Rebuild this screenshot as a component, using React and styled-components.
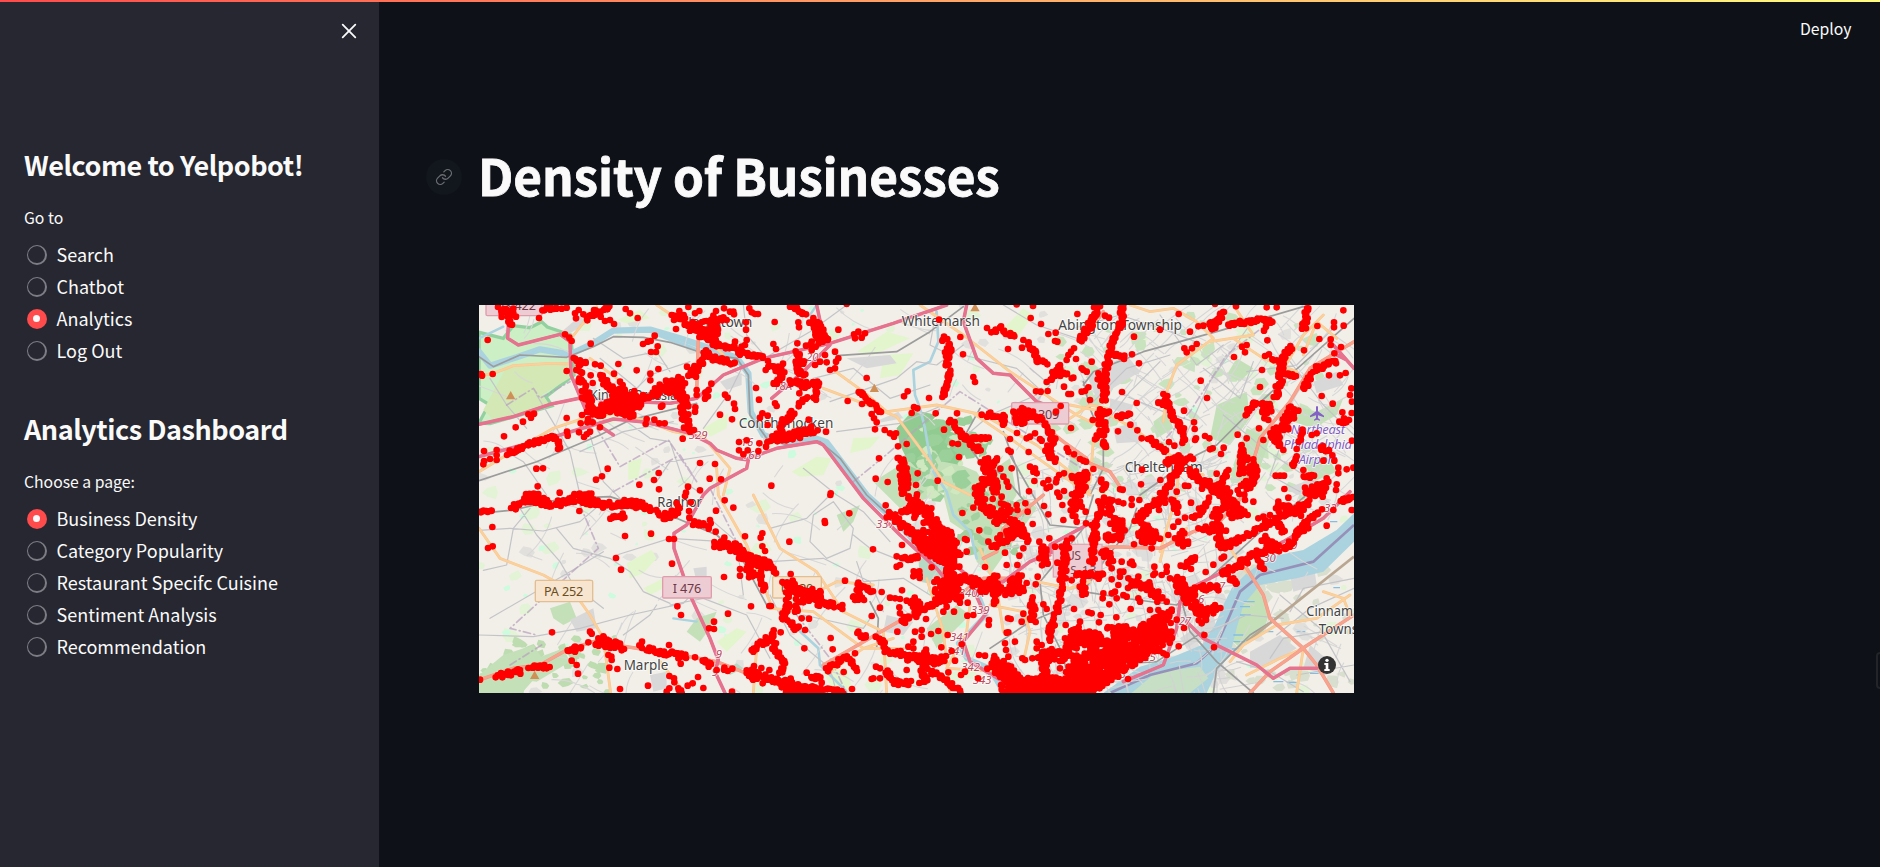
import React from "react";
import styled, { createGlobalStyle } from "styled-components";

const GlobalStyle = createGlobalStyle`
  * { box-sizing: border-box; }
  body {
    margin: 0;
    background: #0e1117;
    color: #fafafa;
    font-family: "Noto Sans CJK SC", "Noto Sans", sans-serif;
  }
`;

const Shell = styled.div`
  position: relative;
  display: flex;
  width: 100%;
  height: 867px;
  overflow: hidden;
`;

const Decoration = styled.div`
  position: absolute;
  inset: 0 0 auto 0;
  height: 2px;
  background: linear-gradient(90deg, #ff4b4b, #fffd80);
`;

const Sidebar = styled.aside`
  flex: 0 0 379px;
  background: #262730;
  padding: 19px 24px;
`;

const SidebarHeader = styled.div`
  display: flex;
  justify-content: flex-end;
  height: 124px;
`;

const CloseButton = styled.button`
  width: 24px;
  height: 24px;
  margin-right: -6px;
  padding: 0;
  border: 0;
  background: none;
  color: #fafafa;
  display: grid;
  place-items: center;
`;

const SidebarTitle = styled.h2`
  margin: 0;
  height: 62px;
  font-size: 27px;
  line-height: 44px;
  font-weight: 600;
  letter-spacing: -0.46px;
  white-space: nowrap;
`;

const RadioLabel = styled.p`
  margin: 0;
  height: 34px;
  padding-top: 1px;
  font-size: 15.75px;
  line-height: 24px;
`;

const RadioGroup = styled.div`
  display: flex;
  flex-direction: column;
  padding-left: 3px;
  margin-bottom: 40px;
`;

const Option = styled.label`
  display: flex;
  align-items: center;
  gap: 9.5px;
  height: 32px;
  font-size: 18px;
  line-height: 32px;
  white-space: nowrap;
`;

const OptionName = styled.span`
  margin-top: -1.5px;
`;

const Ring = styled.span`
  flex: none;
  width: 20px;
  height: 20px;
  border-radius: 50%;
  display: grid;
  place-items: center;
  padding: 0 1px 1px 0;
  background: ${(p) => (p.$on ? "#ff4b4b" : "#262730")};
  border: solid ${(p) => (p.$on ? "#ff4b4b" : "#7d7d85")};
  border-width: ${(p) => (p.$on ? "0" : "1px 2px 2px 1px")};
`;

const Knob = styled.span`
  width: 7px;
  height: 7px;
  border-radius: 50%;
  background: #fafafa;
`;

const Main = styled.main`
  flex: 1;
  min-width: 0;
  display: flex;
  flex-direction: column;
`;

const Toolbar = styled.header`
  display: flex;
  justify-content: flex-end;
  height: 138px;
  padding: 17px 28.5px 0 0;
  font-size: 15.75px;
  line-height: 24px;
`;

const TitleRow = styled.div`
  display: flex;
  align-items: center;
  gap: 16px;
  height: 78px;
  padding-left: 47px;
`;

const Anchor = styled.span`
  width: 36px;
  height: 36px;
  border-radius: 50%;
  background: #12161d;
  color: #6b6d71;
  display: grid;
  place-items: center;
`;

const Title = styled.h1`
  margin: -4px 0 0;
  font-size: 49.5px;
  line-height: 74px;
  font-weight: 700;
  letter-spacing: -0.1px;
  -webkit-text-stroke: 0.8px currentColor;
  white-space: nowrap;
`;

const MapFrame = styled.div`
  width: 875px;
  height: 388px;
  margin: 89px 0 0 100px;
  overflow: hidden;
  background: #f2efe9;
  svg { display: block; }
`;

const EdgeHandle = styled.div`
  position: absolute;
  right: -6px;
  top: 652px;
  width: 10px;
  height: 37px;
  border: 2px solid #222428;
  border-radius: 4px;
`;

/* ---------- map data: drawing units are a third of a pixel ---------- */

const tiles = [
  { x: 0, y: 0,
    dots: "53,135 33,237 36,242 68,237 84,36 95,66 120,88 207,69 42,468 42,498 40,508 60,492 80,465 80,480 80,495 102,424 137,397 159,380 175,358 192,356 183,368 111,480 290,228 290,369 362,146 275,41 290,38 326,45 340,58 318,70 315,55 352,76 392,65 405,78 420,75 432,87 362,60 372,45 467,42 480,55 503,69 285,118 298,128 305,138 519,147 533,140 542,138 554,122 563,154 543,171 558,171 445,207 500,226 565,222 541,236 541,256 392,212 375,208 362,241 368,264 432,236 450,260 458,270 345,288 365,315 336,308 391,240 395,252 400,268 410,275 428,275 530,372 527,387 553,374 568,385 584,385 573,335 577,332 638,431 660,410 672,405 655,392 291,410 293,422 267,440 270,458 264,462 336,360 332,385 352,382 354,372 327,412 342,426 350,418 360,410 368,382 390,397 199,521 219,520 378,554 396,544 413,521 203,574 269,593 566,534 552,555 567,583 508,569 654,575 690,504 735,507 719,551 753,553 690,586 648,593 612,75 605,60 628,48 641,60 618,102 655,36 688,48 675,55 738,48 730,62 737,80 780,50 790,50 762,40 792,58 770,75 750,75 828,82 828,104 838,40 845,52 855,57 864,57 795,140 793,152 778,160 830,135 825,150 815,155 660,107 651,215 663,225 672,235 655,242 684,228 678,245 625,246 680,285 680,300 724,266 716,285 765,299 773,308 792,326 795,342 786,373 750,359 675,350 676,337 858,279 867,314 877,355 870,368 893,362 893,390 807,441 807,466 830,436 833,466 820,478 868,445 888,455 865,468 887,225 895,215",
    trails: "8:95,48 125,45 130,65|5:215,42 240,42 262,38|5:355,70 380,50 420,38|8:610,60 640,75|12:655,90 690,105 715,130 745,145|12:700,120 740,110 720,90|4:740,150 785,160|9:700,85 760,70|7:800,170 850,180 880,190|7:700,170 730,190 790,205|8:660,240 690,205 715,175|13:560,290 600,265 640,262|10:560,290 620,280|14:630,290 640,330 650,390|8:390,245 430,290 440,310|28:430,310 500,315|30:440,320 490,318|14:450,340 490,355|5:500,320 560,300|14:370,355 430,330|14:365,350 430,345|4:315,190 350,205|10:320,200 330,250 345,290 365,330|6:115,475 180,445 250,425|5:250,425 268,455|3:170,600 205,598|3:315,600 365,598|10:700,310 715,290|7:110,45 120,85" },
  { x: 900, y: 0,
    dots: "14,81 10,147 18,162 39,206 88,295 15,325 20,333 116,374 168,410 120,400 205,104 252,118 255,130 265,110 285,115 275,128 130,69 85,82 87,97 82,145 75,42 95,55 108,58 108,152 120,150 165,180 195,170 205,190 198,200 135,210 150,200 170,202 180,225 195,220 290,249 233,318 276,327 315,403 344,405 305,357 312,370 320,382 360,415 372,425 378,415 384,454 410,447 327,490 317,551 353,561 413,289 402,304 425,354 432,336 442,340 477,309 497,355 507,74 571,126 579,178 610,246 615,261 714,162 756,158 733,124 782,69 813,87 789,33 740,28 835,117 855,138 862,140 857,113 870,210 882,275 895,297 895,180 890,195 798,289 812,290 833,288 872,333 858,350 635,359 661,361 680,365 700,360 702,385 730,350 741,414 720,432 780,425 795,415 770,430 776,471 715,466 722,470 691,521 725,520 777,589 793,558 862,593 882,588 882,535 867,540 860,552 858,562 835,555 820,565 840,575 830,580 443,535 438,570 503,557 441,598 522,404 537,382 561,355 547,445 564,447 567,486 815,437 810,432 890,460 895,470 780,515 795,520 800,535 790,530 710,560 715,575 700,545 4,572 182,595 60,35 70,35 230,27",
    trails: "4:80,40 100,58|15:125,85 160,110 130,155|12:140,100 165,130|13:85,180 95,240|9:0,205 25,225 45,245|5:10,270 35,245|8:60,260 100,270 145,265|5:85,330 110,310|5:135,310 145,260|10:70,355 40,385 20,430|12:0,430 60,425 130,405|5:268,288 300,320 330,350|11:390,490 400,540 405,590|6:400,500 410,550|9:523,125 535,165 530,215|4:540,230 530,270 520,305|9:660,100 680,115|6:690,100 730,122|7:765,140 790,160 800,200|5:800,190 830,205|6:870,215 835,260|5:850,235 890,240|16:745,385 750,355 800,370|7:650,360 680,360|5:700,360 700,390|9:825,390 850,430 830,470 860,500|8:545,380 580,420 625,465|7:600,430 650,430|12:640,490 660,540 685,590|5:680,490 660,520|14:625,580 650,550" },
  { x: 1800, y: 0,
    dots: "22,57 72,37 117,68 105,62 192,125 270,104 326,57 207,205 186,178 65,200 18,192 12,160 3,170 40,225 50,230 35,220 10,248 5,250 45,288 55,277 35,290 3,297 156,291 200,324 60,315 392,257 411,309 342,347 372,382 374,402 360,110 385,94 400,92 380,147 366,160 343,160 350,172 492,186 516,155 530,150 525,172 585,183 597,178 576,225 570,276 592,136 503,419 567,400 590,37 620,37 498,34 435,27 702,166 748,132 782,133 782,150 793,175 813,156 742,93 792,82 792,97 821,92 820,46 777,241 810,241 827,234 844,280 840,300 846,320 755,303 788,326 845,354 817,352 822,370 846,437 580,435 530,430 588,95 605,80 582,107 68,375 144,409 181,389 202,406 3,399 12,478 40,497 70,522 48,500 30,492 18,545 155,365 180,357 215,430 297,441 313,452 378,430 405,423 418,430 375,435 420,463 428,460 461,458 453,477 213,568 216,524 150,583 158,584 271,555 320,590 345,572 355,573 396,581 440,536 475,525 465,540 617,542 630,542 642,542 643,582 700,525 715,542 725,540 697,405 740,415 725,420 680,462 630,452 640,465 805,518 805,535 830,523 850,518 760,497 793,497 770,550 775,560 760,565 800,568 798,585",
    trails: "8:85,40 60,90 30,140|6:155,30 155,80 125,150 110,210 105,310|7:130,180 165,185|9:85,240 105,310|13:90,345 95,410|4:85,360 115,352|3:75,435 90,410|6:100,435 108,460|4:145,365 175,360|6:285,300 300,350 335,400 340,440|4:262,325 290,330|5:235,430 285,468|8:460,45 430,100|6:418,80 430,100|6:475,88 560,75 605,80|8:715,35 700,100|8:668,150 635,200 630,260 615,310|4:610,195 640,200|3:640,235 675,243|8:800,200 740,220 700,280|14:585,320 590,365|6:560,320 525,360|15:670,340 640,400 605,430|8:610,420 625,455|8:810,385 840,380|8:750,455 780,475|4:700,405 690,440|4:680,485 668,515|11:290,500 360,490|8:340,500 300,560 275,598|11:360,530 430,580 480,590|8:470,540 430,590|8:515,455 515,540|14:540,500 555,540 515,590|12:10,555 45,540 30,590|8:100,555 105,580|14:715,590 760,580|8:320,480 330,520|5:700,540 730,545" },
  { x: 0, y: 600,
    dots: "67,96 54,159 68,154 35,50 50,48 64,48 328,48 430,64 456,60 457,70 465,123 543,116 438,189 453,224 606,206 597,132 612,132 762,246 810,222 810,242 764,16 790,38 738,47 658,68 657,48 662,22 620,24 737,110 763,128 720,75 722,85 825,124 877,115 872,128 877,154 885,168 246,412 360,410 365,416 355,442 622,334 633,360 774,356 843,334 898,333 732,380 732,402 717,400 305,497 320,510 324,536 418,518 442,522 424,485 425,495 415,480 516,440 597,450 450,582 534,572 598,543 612,550 613,562 598,580 590,590 632,506 675,487 705,495 716,515 740,525 684,546 668,565 653,572 700,579 786,590 30,554 315,455 333,457 315,470 880,283 873,268 852,513 874,519 878,565 898,525 645,3",
    trails: "3:30,50 65,47|9:125,40 180,15 260,28 340,10 400,28 500,30 550,42|11:170,12 220,15|12:330,15 370,20|12:460,25 520,30|6:425,66 460,62|12:570,60 600,60 630,45|7:670,85 715,95|12:740,150 800,160 840,190 895,210|15:820,180 850,240|14:850,200 895,205|6:870,230 880,280|11:380,440 430,450 455,455|12:395,425 420,460|7:515,455 560,472 640,480|10:620,480 645,485|5:700,495 725,510|7:760,520 780,522|8:80,540 155,530|8:180,520 235,515|5:290,470 330,455|8:845,470 895,430|10:825,535 895,550|6:625,580 640,590|6:850,520 850,555" },
  { x: 900, y: 600,
    dots: "164,78 165,84 238,55 58,140 309,163 181,0 347,31 484,40 577,54 610,38 628,106 590,135 590,170 568,215 585,132 380,184 380,215 390,210 396,150 405,190 435,190 485,217 645,216 710,210 742,210 748,182 760,160 705,173 803,245 770,264 797,268 682,130 655,140 665,155 225,257 335,291 396,286 330,338 305,363 182,429 188,463 103,460 62,237 18,235 3,333 48,292 105,405 117,371 95,370 75,350 80,400 32,412 255,475 221,531 155,563 110,533 246,582 382,410 468,372 388,337 390,355 520,350 530,335 552,350 570,323 593,323 592,362 610,360 657,375 656,390 714,370 722,372 755,380 760,356 780,370 715,412 710,413 705,445 735,440 708,465 533,420 483,417 505,408 514,457 528,483 545,468 555,497 575,448 627,480 645,482 652,521 624,550 573,540 585,530 505,505 535,532 410,525 415,570 423,558 385,570 360,535 310,550 330,550 318,515 330,520 305,552 820,328 830,342 887,390 885,430 890,445 757,490 765,495 715,485 855,155 875,155 838,130 820,155 808,140 800,440 815,450 800,460 862,203 875,205 766,25 773,50 788,87 822,33 835,58 880,75 877,30 868,5 740,30 742,45 695,5 668,12 850,580 886,580 895,530 870,520 440,3 415,10 360,308 375,310 390,312 455,405 435,410 455,425 430,440 415,455 430,460",
    trails: "5:0,205 20,235|11:360,60 410,100 450,150 520,200 545,250|12:415,15 470,50 490,90 540,120 560,180|6:395,55 430,35|30:480,100 520,160|26:500,130 540,180|14:440,120 470,160|15:540,180 540,270|8:400,190 440,185|10:430,240 455,240|6:430,60 440,65|12:420,310 445,340|8:395,380 440,355 500,320 560,300|18:510,280 560,300|8:500,260 540,265|12:570,250 640,270 690,290|16:640,290 680,250|5:670,290 675,330|12:710,300 740,265 750,290|6:720,260 755,240|12:625,5 650,40 690,80|12:695,30 730,80 770,130|16:700,130 740,100|6:670,155 700,140|12:815,160 820,205|9:890,140 880,230 875,300 855,350|8:785,315 790,375|10:850,375 840,440|15:800,490 890,480|16:830,470 820,590|22:690,510 730,560 760,580|20:700,570 895,570|20:780,580 895,560|14:45,250 80,280 140,300|14:90,310 150,300|8:145,325 215,335|7:60,290 50,340 40,370 80,400|4:75,330 85,350|5:265,265 305,290|6:250,310 280,310|5:265,280 265,310|7:5,410 15,460 40,500 35,530|8:0,560 60,560 100,575 150,585 220,590|12:45,585 130,585|5:120,550 150,545|7:170,525 225,485 265,525|8:325,425 350,465 400,480|8:260,415 290,430|7:350,530 370,560 420,565|12:410,490 480,500 520,495|12:470,470 460,560|7:480,530 520,550 570,590|12:670,490 690,540" },
  { x: 1800, y: 600,
    dots: "47,50 48,85 65,90 20,80 30,20 35,35 125,45 110,20 145,20 160,25 185,30 208,15 185,12 265,15 285,23 267,45 310,25 325,35 345,68 325,80 363,23 295,120 315,130 340,115 345,145 325,145 310,95 192,148 245,160 470,10 525,15 550,20 533,60 565,70 580,65 600,60 622,75 625,20 655,8 735,3 758,5 790,45 770,92 845,45 820,20 835,15 700,30 690,55 715,100 702,108 675,128 625,95 640,110 585,75 595,88 540,180 385,100 400,105 415,108 468,107 430,209 455,190 462,185 440,280 445,286 407,231 375,187 365,190 345,215 363,222 332,212 320,250 500,265 490,250 570,215 582,222 432,457 403,420 342,399 326,454 174,552 290,480 280,475 263,460 155,200 185,200 190,210 180,205 125,253 150,230 150,245 160,230 125,220 12,342 55,352 65,355 92,360 87,382 118,328 139,367 168,397 100,295 98,310 125,295 135,290 140,310 145,270 160,300 170,305 210,320 205,310 182,342 238,262 240,280 230,285 253,215 255,235 290,215 290,230 275,240 300,250 250,240 205,245 195,260 185,260 175,250 265,290 260,305 275,310 240,345 265,345 262,320 290,320 435,330 438,345 430,355 395,385 410,355 5,256 8,405 30,380 20,460 5,130",
    trails: "10:10,0 10,60|8:95,10 85,70 70,150 65,200|9:120,10 115,60|14:130,70 150,110 110,130|4:160,80 150,130|8:200,75 240,35 280,10|5:205,60 215,90|14:210,130 260,130|12:215,95 250,120|8:310,10 320,45|10:335,105 345,150|9:375,65 415,15|9:440,60 450,150 490,150|14:460,10 510,50 480,70|14:410,100 450,100|12:430,60 490,20|7:450,160 560,105 660,50 720,20|10:455,240 520,200 590,160 660,160|10:580,130 620,150|7:660,150 690,100 750,45|12:620,40 700,50|6:620,80 640,110|5:815,15 845,10|4:565,200 580,220|12:105,170 120,200|9:20,240 100,245|8:35,265 45,300|10:180,270 230,275 270,310|14:320,250 350,310 390,350 400,380|12:320,280 380,290|5:345,210 375,190|9:390,280 440,275|5:480,250 500,262|10:390,345 440,340|30:0,520 60,500 150,460 230,420 300,380|28:0,570 100,540 200,470 290,425|18:30,590 90,560|22:20,430 100,440|16:0,470 20,400|16:120,410 180,410|16:230,390 300,360" },
];

function makeRandom(seed) {
  let s = seed;
  return () => {
    s = (s * 1664525 + 1013904223) % 4294967296;
    return s / 4294967296;
  };
}

const toPairs = (text) => text.split(" ").map((p) => p.split(",").map(Number));

function businessPath() {
  const rnd = makeRandom(17);
  const out = [];
  tiles.forEach((tile) => {
    const put = (x, y) => out.push(`M${(tile.x + x).toFixed(0)} ${(tile.y + y).toFixed(0)}h.1`);
    toPairs(tile.dots).forEach(([x, y]) => put(x, y));
    tile.trails.split("|").forEach((trail) => {
      const [spread, list] = trail.split(":");
      const pts = toPairs(list);
      const jitter = Number(spread);
      const step = jitter > 16 ? 1.1 : jitter > 10 ? 2.6 : 4.6;
      for (let i = 1; i < pts.length; i += 1) {
        const [ax, ay] = pts[i - 1];
        const [bx, by] = pts[i];
        const n = Math.max(2, Math.round(Math.hypot(bx - ax, by - ay) / step));
        for (let k = 0; k <= n; k += 1) {
          const t = k / n;
          const angle = rnd() * Math.PI * 2;
          const r = Math.sqrt(rnd()) * jitter * 1.15;
          put(ax + (bx - ax) * t + Math.cos(angle) * r, ay + (by - ay) * t + Math.sin(angle) * r);
        }
      }
    });
  });
  return out.join("");
}

/* Irregular parcels of grass, woodland and built-up land. */
function parcels(seed, count, size, x0, y0, w, h) {
  const rnd = makeRandom(seed);
  let d = "";
  for (let i = 0; i < count; i += 1) {
    const cx = x0 + rnd() * w;
    const cy = y0 + rnd() * h;
    const r = size * (0.35 + rnd() * 0.8);
    const corners = 6;
    for (let k = 0; k < corners; k += 1) {
      const a = (k / corners) * Math.PI * 2;
      const q = r * (0.5 + rnd() * 0.6);
      d += `${k ? "L" : "M"}${(cx + Math.cos(a) * q).toFixed(0)} ${(cy + Math.sin(a) * q * 0.8).toFixed(0)}`;
    }
    d += "Z";
  }
  return d;
}

/* Local streets: slightly bent segments that follow one of two bearings. */
function streets(seed, count, x0, y0, w, h, bearing, length) {
  const rnd = makeRandom(seed);
  let d = "";
  for (let i = 0; i < count; i += 1) {
    const x = x0 + rnd() * w;
    const y = y0 + rnd() * h;
    const a = bearing + (rnd() > 0.5 ? Math.PI / 2 : 0) + (rnd() - 0.5) * 0.45;
    const l = length * (0.4 + rnd());
    const bend = (rnd() - 0.5) * l * 0.4;
    d += `M${x.toFixed(0)} ${y.toFixed(0)}q${(Math.cos(a) * l * 0.5 - Math.sin(a) * bend).toFixed(0)} ${(Math.sin(a) * l * 0.5 + Math.cos(a) * bend).toFixed(0)} ${(Math.cos(a) * l).toFixed(0)} ${(Math.sin(a) * l).toFixed(0)}`;
  }
  return d;
}

const meadows = [
  "M27 384L60 386L246 332L228 305L312 240L302 120L232 96L215 80L180 98L130 92L100 130L27 112V310L60 330L44 352Z",
  "M470 805L545 765L560 790L520 835L480 850Z", "M520 880L600 840L580 880L540 900Z",
  "M700 400L775 355L770 400L720 425Z", "M475 500L515 490L505 550L475 555Z",
  "M1160 170L1250 110L1320 130L1210 180Z", "M1240 180L1330 175L1290 240L1230 250Z",
  "M965 530L1040 485L1085 490L1060 540L990 545Z", "M1150 430L1230 425L1200 460L1140 475Z",
  "M1590 110L1660 40L1690 60L1640 130Z", "M440 75L510 45L540 70L470 85Z",
  "M740 1040L800 1000L830 1010L770 1070Z", "M1060 1130L1130 1120L1150 1190L1090 1190Z",
];

const woods = [
  "M1210 560L1290 510L1340 430L1320 400L1335 345L1360 360L1380 400L1450 430L1500 470L1450 500L1520 530L1540 560L1470 580L1400 600L1290 640Z",
  "M1280 400L1330 345L1400 360L1370 395L1430 430L1410 470L1360 460L1370 500L1340 520L1310 490L1290 450Z",
  "M1350 350L1380 380L1450 390L1480 380L1440 410L1500 430L1530 470L1480 480L1470 510L1420 500L1390 460L1350 440L1370 410L1330 400Z",
  "M1450 540L1540 560L1570 510L1600 480L1540 600L1600 700L1640 650L1660 600L1700 640L1560 840L1520 800L1500 720L1440 680L1420 600Z",
  "M1560 530L1620 490L1640 600L1580 690L1540 660Z",
  "M2240 330L2330 290L2340 370L2280 450L2220 430Z", "M2300 190L2350 220L2310 260L2270 240Z",
  "M2330 400L2400 430L2370 520L2310 560L2290 510Z", "M2050 380L2090 350L2110 400L2060 430Z",
  "M27 1140L100 1080L190 1050L230 1110L150 1200L27 1200Z", "M240 940L300 920L320 970L280 990L250 970Z",
  "M120 1150L200 1090L280 1060L300 1100L200 1160Z",
  "M650 1010L680 970L740 950L720 1000L690 1040Z", "M1100 660L1170 630L1150 680L1120 710Z",
  "M1370 1000L1460 930L1500 960L1460 1000L1400 1060Z", "M2300 900L2350 860L2400 950L2380 1010L2310 1060L2270 1020Z",
  "M2000 1190L2080 1140L2180 1120L2220 1150L2160 1194Z",
  "M2500 500L2570 480L2600 530L2530 560Z", "M1800 480L1830 470L1825 530L1795 540Z",
  "M2470 330L2540 350L2620 310L2600 360L2530 400L2470 380Z",
];

const industry = [
  "M275 110L330 62L350 85L300 115Z", "M750 260L815 235L815 270L770 285Z", "M1130 190L1260 180L1280 205L1190 220Z",
  "M1215 380L1285 350L1300 370L1220 385Z", "M1850 240L1970 180L2010 230L1880 310Z", "M1920 310L1990 330L1980 360L1920 340Z",
  "M1930 400L2000 380L2010 440L1940 445Z", "M2530 260L2600 230L2620 270L2540 295Z", "M2450 580L2530 550L2560 590L2480 600Z",
  "M2340 1070L2430 1020L2480 1060L2400 1110L2340 1120Z", "M2520 1050L2580 1100L2570 1140L2500 1120Z",
  "M540 1140L590 1130L590 1180L550 1190Z", "M670 820L710 815L710 850L680 860Z", "M2460 840L2530 800L2540 870L2470 890Z",
  "M1250 960L1330 980L1300 1020L1240 1010Z", "M300 975L370 940L380 1000L320 1010Z", "M2130 1030L2230 960L2240 1000L2150 1060Z",
];

const lanes = [
  "M27 706L120 700L220 708L330 680L400 620", "M40 826L110 810L130 700L180 640", "M150 640L200 720L270 800L310 870L400 940",
  "M27 1020L190 1025L330 1000L480 960L640 925L700 860", "M260 700L310 760L420 790L480 830L520 890L600 925", "M440 780L600 730L760 740",
  "M60 970L300 830L400 770", "M27 530L90 460L160 500L230 600", "M200 300L260 400L300 470L330 600", "M60 250L110 330L170 400",
  "M330 470L460 410L610 380", "M360 420L400 560L480 640", "M470 380L540 430L600 440L640 560L700 600", "M560 560L600 500L730 480",
  "M390 190L500 280L540 240L660 200", "M370 130L460 190L560 170L600 230", "M700 400L780 290L820 210", "M900 180L1020 110L1130 30",
  "M820 30L830 120L900 200", "M1030 250L1150 220L1260 310L1380 270", "M1080 320L1280 250L1340 200L1400 210L1480 150",
  "M1100 410L1290 385L1420 330", "M1000 520L1100 600L1180 650L1260 740", "M900 700L1010 670L1080 600", "M1030 660L1090 620L1150 700L1140 760L1070 790L1020 740Z",
  "M900 800L1060 790L1200 860L1240 950", "M1160 800L1180 860L1300 850L1380 900", "M1150 720L1200 760L1300 800", "M1000 960L1180 1000L1250 900",
  "M900 900L960 1020L1080 1120L1100 1194", "M600 930L700 910L830 960L900 1090", "M460 1020L540 960L560 930", "M730 680L800 740L820 900",
  "M1400 40L1380 150L1440 180", "M1490 420L1560 360L1700 300", "M1480 180L1640 220L1760 330", "M1600 30L1700 90L1850 140",
  "M1680 220L1740 270L1690 330", "M1860 330L1970 220L2100 180", "M1880 420L1980 290L2070 200", "M1810 100L1950 60L2100 110L2200 150",
  "M1960 300L2080 350L2170 380", "M2070 60L2180 210L2260 150", "M2130 460L2220 260L2360 60", "M2200 220L2310 310L2350 200",
  "M2260 360L2380 460L2560 580", "M2460 200L2560 330L2652 420", "M2330 230L2480 210L2600 90", "M2450 400L2400 540L2490 590",
  "M2420 1020L2520 940L2652 880", "M2430 900L2550 1000L2640 1160", "M2300 1100L2400 1130L2500 1190", "M2400 1090L2440 1030L2560 1010",
  "M2460 950L2500 880L2652 850", "M2200 1020L2330 960L2440 970", "M2480 1140L2652 1110",
];

const rails = [
  "M27 185L70 215L150 180L290 187L370 155L430 125L520 127L600 142L700 175L800 190L835 240L840 360L890 430L960 452L1050 440L1110 490L1190 600L1300 700L1420 810",
  "M1100 182L1280 170L1380 110L1480 35", "M27 557L200 500L390 420L480 375L680 325", "M27 655L130 645L280 610L420 605L620 670L740 720L810 780L890 930",
  "M2000 640L1980 700L1900 800L1840 890L1980 912L2120 930L2240 830L2360 720L2560 560",
  "M1800 930L1680 980L1560 1060", "M1870 600L1840 700L1760 800L1710 860L1720 960L1780 1080L1800 1194",
  "M1840 270L1870 230L2020 170L2240 110L2500 35", "M1840 260L1860 340L1900 440L1900 520L1860 600",
  "M2010 600L2180 480L2240 450L2340 350L2460 240L2652 70", "M2350 1194L2240 1100L2160 1010L2130 900", "M1200 920L1225 970L1220 1060",
  "M1530 340L1480 430L1530 500L1600 540L1680 640", "M1600 410L1640 520L1650 600", "M1900 1110L2060 1100L2200 1010",
  "M2230 1194L2240 1120L2340 1020L2420 970", "M1620 480L1740 690L1840 700",
];

const primary = [
  "M27 243L70 235L130 212L240 205L300 207", "M27 530L110 480L250 400L340 370L430 355L520 375L610 410L700 425L720 450L780 520L760 600",
  "M300 135L350 70L380 35", "M560 30L650 90L720 140L760 180", "M360 190L440 250L500 320", "M27 700L90 790L220 840L310 890L360 960L400 1030L422 1194",
  "M1090 225L1180 290L1250 350L1400 330L1540 360L1700 450L1800 530L1860 590", "M1060 280L1180 325L1280 365L1380 500L1420 560L1500 600",
  "M1350 30L1480 120L1620 230L1820 360L1900 400", "M1510 355L1620 430L1760 530L1860 600", "M850 600L930 760L1040 830L1120 950L1240 1010L1250 1194",
  "M1040 890L1100 860L1210 870", "M900 940L1030 950L1180 1060L1300 1060", "M740 520L745 600L830 750L900 920", "M860 1060L850 1194",
  "M1980 30L2040 50L2110 40L2180 80L2230 130L2120 210L2090 290L2080 380", "M2220 140L2350 120L2290 30M2290 130L2380 190L2480 230",
  "M1800 370L1860 330L1910 340L1870 440L1860 560L1800 640", "M1800 330L1900 350L1990 400L2100 480L2200 540", "M2130 480L2120 600L2070 770",
  "M2430 240L2500 120L2560 60", "M2500 180L2540 80L2600 130", "M1500 930L1490 1010L1430 1120L1600 1130", "M1560 930L1660 950L1680 1010L1660 1100",
  "M1370 850L1420 1010L1440 1190", "M1530 760L1580 880L1600 1010", "M1700 860L1800 880L1860 860", "M2280 1100L2320 1050L2420 990L2540 970L2640 900",
  "M2560 890L2620 910L2640 960", "M2330 1140L2430 1090L2500 1060L2480 1194", "M2150 700L2080 760L2070 800", "M570 1100L640 1190",
  "M1270 1030L1180 1060L1080 1130", "M2240 700L2320 820L2340 840",
];

const trunks = [
  "M27 1155L130 1120L210 1110L290 1065L370 1040L500 1060L660 1085L740 1100L830 1135L900 1150", "M680 290L685 130",
  "M1060 1110L1190 1035L1320 960L1450 910L1540 850L1640 850", "M1540 790L1580 770L1600 700L1720 600", "M1800 770L1930 755L2070 760L2170 710L2240 690L2320 600L2370 430L2460 320L2520 220L2652 140",
  "M2330 820L2380 900L2400 970L2500 1060L2540 1110L2590 1194", "M2490 1065L2652 960", "M2340 1194L2400 1130L2500 1060",
  "M1800 480L1920 530L1960 590", "M1730 400L1780 440L1850 490", "M1850 120L1900 50",
];

const motorways = [
  "M115 90L113 130L145 150L270 118L300 140L303 240L345 340L370 380L430 420", "M27 388L130 365L240 328L350 305L410 320", "M27 485L270 420L370 390L430 372L530 382L660 415L720 445L740 465L800 490L835 495L830 520L720 580L700 600L650 690L612 715L612 760L660 900L720 1030L745 1095L735 1130L765 1194",
  "M500 320L600 325L680 310L760 240L880 190L1080 145L1270 85L1430 30", "M1040 30L1055 100L1080 150L1000 230L905 310", "M835 490L920 460L1040 440L1060 450L1180 610L1290 720L1400 820L1440 870",
  "M1490 30L1480 80L1520 190L1570 235L1620 240L1700 320L1760 340", "M1440 800L1530 870L1600 860L1680 800L1750 770",
  "M1500 860L1545 960L1480 1040L1500 1100L1600 1160L1660 1194", "M1960 1160L2080 1110L2120 1000L2130 920L2180 870L2300 810L2440 740L2560 670L2640 590", "M2150 980L2200 1030L2360 1110L2410 1150L2460 1120L2540 1120",
  "M2590 150L2652 220", "M2600 180L2630 195", "M1740 780L1740 750L1850 690",
];

const boundaries = ["M380 400L450 515L595 435L680 560", "M430 590L630 480L680 560", "M330 630L385 760L285 850L120 1000L200 1020", "M215 1050L120 1110",
  "M110 330L190 280L210 310L300 260", "M1150 560L1260 470L1470 290L1900 560", "M2060 460L2160 350L2270 180L2400 80", "M980 960L1080 1090L1130 1194", "M720 580L800 740"];

const labels = [
  { t: "King of Prussia", x: 360, y: 315, w: 262 },
  { t: "Norristown", x: 635, y: 95, w: 212 },
  { t: "Conshohocken", x: 806, y: 399, w: 284 },
  { t: "Whitemarsh", x: 1295, y: 92, w: 235 },
  { t: "Abington Township", x: 1765, y: 104, w: 371 },
  { t: "Cheltenham", x: 1964, y: 531, w: 234 },
  { t: "Radnor", x: 562, y: 636, w: 134 },
  { t: "Marple", x: 461, y: 1126, w: 134 },
  { t: "Cinnaminson", x: 2509, y: 962, w: 240 },
  { t: "Township", x: 2546, y: 1016, w: 178 },
];

const exits = [
  ["329", 656, 433], ["16", 812, 454], ["16B", 816, 493], ["20", 1008, 198], ["18A", 910, 286], ["337", 1218, 700], ["340A", 1466, 905],
  ["339", 1502, 957], ["341", 1440, 1038], ["341", 1430, 1081], ["342", 1474, 1127], ["343", 1508, 1168], ["27", 2126, 989],
  ["9", 737, 1088], ["9", 725, 1142], ["30", 2444, 762], ["30", 2380, 802], ["32", 2562, 652], ["27", 2228, 885], ["26", 2165, 925],
  ["25", 2020, 1098], ["23", 1930, 1150],
];

const shields = [
  { t: "US 422", x: 48, y: 10, w: 168, h: 52, tone: "pink", tx: 76, tw: 122 },
  { t: "PA 252", x: 196, y: 856, w: 172, h: 64, tone: "tan", tx: 222, tw: 118 },
  { t: "I 476", x: 578, y: 845, w: 146, h: 64, tone: "pink", tx: 608, tw: 86 },
  { t: "US 30", x: 908, y: 845, w: 146, h: 64, tone: "tan", tx: 932, tw: 98 },
  { t: "PA 309", x: 1625, y: 323, w: 171, h: 64, tone: "pink", tx: 1650, tw: 118 },
];

const Strokes = ({ list, color, width, casing, ...rest }) => (
  <g fill="none" strokeLinecap="round" strokeLinejoin="round" {...rest}>
    {casing && <path d={list.join("")} stroke={casing} strokeWidth={width + 2.5} />}
    <path d={list.join("")} stroke={color} strokeWidth={width} />
  </g>
);

const PlaceText = styled.text`
  font-family: "Noto Sans", sans-serif;
  font-size: ${(p) => p.$size || 41}px;
  font-style: ${(p) => (p.$italic ? "italic" : "normal")};
  fill: ${(p) => p.$color || "#444"};
  stroke: ${(p) => p.$halo || "rgba(255, 255, 255, 0.75)"};
  stroke-width: 5px;
  paint-order: stroke;
`;

const RIVER = "M27 170L60 212L140 187L210 163L300 178L370 145L430 107L540 104L630 130L720 160L800 188L835 235L842 350L880 420L960 448L1035 430L1070 442L1190 600L1290 690L1370 780L1420 812L1460 860";

function DensityMap() {
  return (
    <svg width="875" height="388" viewBox="27 30 2625 1164" role="img" aria-label="Density of Businesses">
      <rect x="27" y="30" width="2625" height="1164" fill="#f2efe9" />
      <path d={parcels(5, 120, 32, 27, 30, 2625, 1164)} fill="#e3f3d5" />
      <path d={parcels(9, 130, 16, 27, 30, 2625, 1164)} fill="#cdfbdd" />
      <path d={parcels(21, 130, 22, 27, 30, 2625, 1164)} fill="#e2e0dd" />
      <path d={parcels(33, 110, 26, 1750, 60, 800, 560)} fill="#c9e3be" />
      <path d={parcels(41, 110, 30, 1600, 560, 700, 620)} fill="#e0dedc" />
      <path d={parcels(47, 50, 22, 27, 1020, 420, 174)} fill="#bddcb0" />
      <path d={parcels(51, 50, 26, 2270, 820, 382, 370)} fill="#d8dfce" />
      <path d={meadows.join("")} fill="#e2f5cd" />
      <path d={meadows[0]} fill="#ccefc6" stroke="#93d0a0" strokeWidth="10" />
      <path d="M40 345L110 215L250 207L308 215L306 245L215 300L240 330L70 375Z" fill="#d3e8b4" />
      <path d={woods.join("")} fill="#c3e0b8" />
      <path d={woods.slice(1, 3).join("")} fill="#91cb91" />
      <path d={parcels(61, 45, 30, 1300, 370, 270, 240)} fill="#9bd09b" />
      <path d={parcels(63, 26, 20, 1330, 380, 220, 220)} fill="#cfe8c0" />
      <path d={parcels(67, 36, 26, 1470, 600, 180, 180)} fill="#a4cf9f" />
      <path d={industry.join("")} fill="#d9d8d8" />
      <path d="M1345 790L1420 790L1430 850L1400 870L1350 860Z M1630 390L1660 330L1685 325L1690 345Z M760 1125L800 1105L820 1120L780 1140Z" fill="#b9d8c4" />

      <g fill="none" strokeLinecap="round" strokeLinejoin="round" stroke="#aad3df">
        <path d={RIVER} strokeWidth="19" />
        <path d="M560 118L650 152L740 190L800 205" strokeWidth="11" />
        <path d="M1525 900L1548 960L1500 1010L1465 1045L1490 1090L1560 1120L1600 1194" strokeWidth="15" />
        <path d="M1400 50L1405 140L1380 200L1330 225L1335 300L1350 340L1365 400L1375 460L1390 530L1430 590L1450 660L1500 710L1520 790" strokeWidth="8" />
        <path d="M980 1000L1045 1060L1050 1110L1130 1190" strokeWidth="8" />
        <path d="M1040 30L1020 60 M27 130L100 95 M610 970L680 980" strokeWidth="7" />
      </g>
      <path d="M2652 655L2600 705L2500 765L2400 785L2330 835L2285 880L2260 930L2235 990L2195 1050L2110 1085L2010 1115L1900 1194H2210L2240 1130L2280 1080L2300 1000L2320 930L2370 870L2480 850L2560 830L2652 740Z" fill="#aad3df" />
      <path d="M1985 1194L2060 1130L2190 1115L2215 1150L2160 1194Z" fill="#c6dfc5" />
      <path d="M1920 1194L2040 1140L2180 1105L2240 1050L2280 960L2310 890L2370 840L2530 800L2652 690" fill="none" stroke="#9691b8" strokeWidth="8" />
      <path d="M2320 920h34M2310 935h30M2310 960h32M2290 1020h30M2290 1040h36M2285 1062h30M2380 1010h30M2410 1160h30M2450 1162h30M2480 1010h26M2580 680h22M2590 878h20M2520 1135h26" stroke="#83bde4" strokeWidth="4" />

      <path d={streets(71, 210, 27, 30, 2625, 1164, 0.5, 110)} fill="none" stroke="#d8d7d7" strokeWidth="3.2" />
      <path d={streets(73, 280, 1600, 500, 650, 694, -0.2, 90)} fill="none" stroke="#d3d2d3" strokeWidth="3.2" />
      <path d={streets(79, 150, 1800, 60, 800, 560, -0.75, 110)} fill="none" stroke="#d6d6d7" strokeWidth="3.2" />
      <Strokes list={lanes} color="#c4c4c8" width={3.6} />
      <Strokes list={boundaries} color="#b8a3be" width={5} opacity="0.75" strokeDasharray="22 10 3 10" />
      <Strokes list={rails} color="#9c9c9c" width={5} />
      <path d="M2330 1040L2652 785" stroke="#b9a690" strokeWidth="8" fill="none" />
      <Strokes list={primary} color="#fcd09a" width={6} casing="#f8c690" />
      <Strokes list={trunks} color="#f8a38e" width={8} casing="#f19682" />
      <Strokes list={motorways} color="#e8718e" width={8} casing="#dd7690" />

      {[[122, 302], [1213, 280], [1515, 38], [194, 1141]].map(([x, y]) => (
        <path key={x} d={`M${x - 14} ${y + 11}L${x} ${y - 14}L${x + 14} ${y + 11}Z`} fill="#d08f55" />
      ))}

      <rect x="1750" y="748" width="146" height="98" fill="#edcdd3" stroke="#e2a9b4" strokeWidth="4" />
      {shields.map((s) => (
        <g key={s.t}>
          <rect x={s.x} y={s.y} width={s.w} height={s.h} rx="4" strokeWidth="4"
            fill={s.tone === "pink" ? "#edcdd3" : "#f7e5cf"} stroke={s.tone === "pink" ? "#df9dac" : "#e2be91"} />
          <PlaceText x={s.tx} y={s.y + s.h - 16} textLength={s.tw} $size={38} $halo="transparent"
            $color={s.tone === "pink" ? "#6e3848" : "#6b4d20"}>{s.t}</PlaceText>
        </g>
      ))}
      <PlaceText x="1787" y="794" textLength="46" $size={37} $halo="transparent" $color="#7b4555">US</PlaceText>
      <PlaceText x="1801" y="836" textLength="78" $size={35} $halo="transparent" $color="#7b4555">S 13</PlaceText>

      {labels.map((l) => (
        <PlaceText key={l.t} x={l.x} y={l.y} textLength={l.w} lengthAdjust="spacingAndGlyphs">{l.t}</PlaceText>
      ))}
      {exits.map(([t, x, y], i) => (
        <PlaceText key={i} x={x} y={y} $size={34} $italic $color="#b94a60">{t}</PlaceText>
      ))}
      <g transform="translate(2541 355)" fill="#8461c4">
        <path d="M-3 -20Q0 -24 3 -20V-6L21 7V12L3 6V14L9 19V22L0 19L-9 22V19L-3 14V6L-21 12V7L-3 -6Z" />
      </g>
      <PlaceText x="2462" y="416" textLength="163" $size={39} $italic $color="#8461c4">Northeast</PlaceText>
      <PlaceText x="2440" y="462" textLength="206" $size={39} $italic $color="#8461c4">Philadelphia</PlaceText>
      <PlaceText x="2486" y="507" textLength="114" $size={39} $italic $color="#8461c4">Airport</PlaceText>

      <path d={businessPath()} stroke="#ff0000" strokeWidth="20" strokeLinecap="round" />

      <circle cx="2571" cy="1110" r="27" fill="#333" />
      <path d="M2565 1104H2575V1122H2579V1128H2563V1122H2567V1110H2563V1104Z" fill="#fff" />
      <circle cx="2571" cy="1096" r="5" fill="#fff" />
    </svg>
  );
}

const RadioList = ({ label, options, selected }) => (
  <>
    <RadioLabel>{label}</RadioLabel>
    <RadioGroup role="radiogroup" aria-label={label}>
      {options.map((name) => (
        <Option key={name}>
          <Ring $on={name === selected}>{name === selected && <Knob />}</Ring>
          <OptionName>{name}</OptionName>
        </Option>
      ))}
    </RadioGroup>
  </>
);

export default function App() {
  return (
    <Shell>
      <GlobalStyle />
      <Sidebar>
        <SidebarHeader>
          <CloseButton aria-label="Close sidebar">
            <svg width="16" height="16" viewBox="0 0 16 16" stroke="currentColor" strokeWidth="1.8" strokeLinecap="round">
              <path d="M1.7 1.7L14.3 14.3M14.3 1.7L1.7 14.3" />
            </svg>
          </CloseButton>
        </SidebarHeader>
        <SidebarTitle>Welcome to Yelpobot!</SidebarTitle>
        <RadioList label="Go to" options={["Search", "Chatbot", "Analytics", "Log Out"]} selected="Analytics" />
        <SidebarTitle>Analytics Dashboard</SidebarTitle>
        <RadioList
          label="Choose a page:"
          options={["Business Density", "Category Popularity", "Restaurant Specifc Cuisine", "Sentiment Analysis", "Recommendation"]}
          selected="Business Density"
        />
      </Sidebar>
      <Main>
        <Toolbar>Deploy</Toolbar>
        <TitleRow>
          <Anchor>
            <svg width="18" height="18" viewBox="0 0 24 24" fill="none" stroke="currentColor" strokeWidth="1.7" strokeLinecap="round" strokeLinejoin="round">
              <path d="M10 13a5 5 0 0 0 7.54.54l3-3a5 5 0 0 0-7.07-7.07l-1.72 1.71" />
              <path d="M14 11a5 5 0 0 0-7.54-.54l-3 3a5 5 0 0 0 7.07 7.07l1.71-1.71" />
            </svg>
          </Anchor>
          <Title>Density of Businesses</Title>
        </TitleRow>
        <MapFrame>
          <DensityMap />
        </MapFrame>
      </Main>
      <EdgeHandle />
      <Decoration />
    </Shell>
  );
}
